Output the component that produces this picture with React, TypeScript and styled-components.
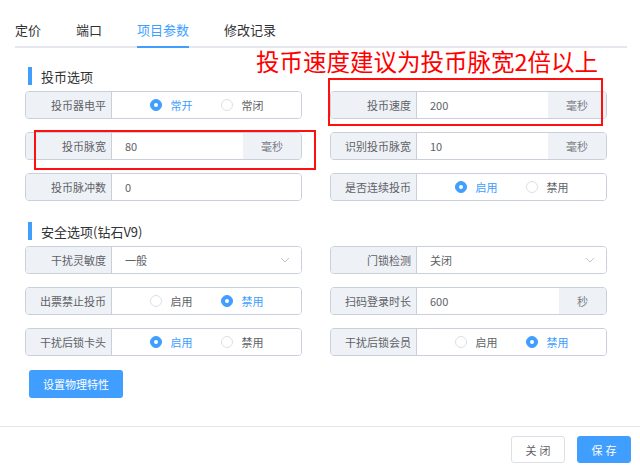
import React from "react";
import styled, { createGlobalStyle } from "styled-components";

const Global = createGlobalStyle`
  html, body { margin: 0; padding: 0; background: #fff; }
  body { font-family: "Noto Sans CJK SC", "Noto Sans", sans-serif; }
  * { box-sizing: border-box; }
`;

const Page = styled.div`
  position: relative;
  width: 640px;
  height: 470px;
  overflow: hidden;
  background: #fff;
`;

const TabBar = styled.div`
  display: flex;
  gap: 35px;
  margin: 14px 13px 0 15px;
  height: 34px;
  border-bottom: 2px solid #e4e7ed;
`;

const Tab = styled.div<{ $active?: boolean }>`
  font-size: 13px;
  line-height: 32px;
  height: 34px;
  color: ${(p) => (p.$active ? "#409eff" : "#303133")};
  border-bottom: 2px solid ${(p) => (p.$active ? "#409eff" : "transparent")};
  white-space: nowrap;
`;

const Body = styled.div`
  padding: 0 0 0 25px;
`;

const SectionTitle = styled.div<{ $top: number; $bottom: number }>`
  display: flex;
  align-items: center;
  height: 18px;
  margin: ${(p) => p.$top}px 0 ${(p) => p.$bottom}px 3px;
  font-size: 13px;
  color: #303133;
  &::before {
    content: "";
    width: 4px;
    height: 18px;
    background: #409eff;
    margin-right: 9px;
  }
`;

const Grid = styled.div`
  display: grid;
  grid-template-columns: 277px 277px;
  grid-auto-rows: 28px;
  column-gap: 28px;
  row-gap: 13px;
`;

const Field = styled.div`
  display: flex;
  height: 28px;
  border: 1px solid #c9d0db;
  border-radius: 4px;
  overflow: hidden;
  font-size: 11px;
  color: #606266;
`;

const Label = styled.div`
  flex: 0 0 86px;
  display: flex;
  align-items: center;
  justify-content: flex-end;
  padding-right: 5px;
  background: #eef1f6;
  border-right: 1px solid #c9d0db;
  white-space: nowrap;
`;

const Value = styled.div`
  flex: 1;
  display: flex;
  align-items: center;
  padding-left: 13px;
  background: #fff;
`;

const Append = styled.div`
  display: flex;
  align-items: center;
  padding: 0 18px;
  background: #eef1f6;
  color: #7a7e85;
`;

const SelectBox = styled(Value)`
  justify-content: space-between;
  padding-right: 11px;
`;

const RadioGroup = styled.div`
  flex: 1;
  display: flex;
  align-items: center;
  justify-content: center;
  gap: 28px;
  background: #fff;
`;

const RadioItem = styled.div<{ $checked?: boolean }>`
  display: flex;
  align-items: center;
  gap: 9px;
  color: ${(p) => (p.$checked ? "#409eff" : "#606266")};
`;

const RadioDot = styled.span<{ $checked?: boolean }>`
  width: 12px;
  height: 12px;
  border-radius: 50%;
  border: 1px solid ${(p) => (p.$checked ? "#409eff" : "#dcdfe6")};
  background: ${(p) => (p.$checked ? "#409eff" : "#fff")};
  display: flex;
  align-items: center;
  justify-content: center;
  &::after {
    content: "";
    width: 4px;
    height: 4px;
    border-radius: 50%;
    background: #fff;
    display: ${(p) => (p.$checked ? "block" : "none")};
  }
`;

const PrimaryButton = styled.button`
  margin-top: 14px;
  margin-left: 4px;
  height: 28px;
  width: 94px;
  border: none;
  border-radius: 3px;
  background: #409eff;
  color: #fff;
  font-family: inherit;
  font-size: 11px;
  padding: 0;
`;

const Footer = styled.div`
  margin-top: 28px;
  border-top: 1px solid #e4e7ed;
  display: flex;
  justify-content: flex-end;
  gap: 12px;
  padding: 9px 9px 0 0;
`;

const FooterButton = styled.button<{ $primary?: boolean }>`
  width: 54px;
  height: 27px;
  border-radius: 3px;
  font-family: inherit;
  font-size: 11px;
  letter-spacing: 3px;
  padding: 0 0 0 3px;
  border: 1px solid ${(p) => (p.$primary ? "#409eff" : "#dcdfe6")};
  background: ${(p) => (p.$primary ? "#409eff" : "#fff")};
  color: ${(p) => (p.$primary ? "#fff" : "#606266")};
`;

const Note = styled.div`
  position: absolute;
  left: 256px;
  top: 48px;
  font-size: 23.5px;
  line-height: 26px;
  color: #ff0000;
  white-space: nowrap;
`;

const RedBox = styled.div`
  position: absolute;
  border: 2px solid #ff1010;
`;

const Chevron = () => (
  <svg width="10" height="6" viewBox="0 0 10 6" fill="none">
    <path d="M1 1l4 4 4-4" stroke="#c0c4cc" strokeWidth="1" />
  </svg>
);

type RadioProps = { options: string[]; value: number };
const Radios = ({ options, value }: RadioProps) => (
  <RadioGroup>
    {options.map((o, i) => (
      <RadioItem key={o} $checked={i === value}>
        <RadioDot $checked={i === value} />
        {o}
      </RadioItem>
    ))}
  </RadioGroup>
);

export default function App() {
  return (
    <Page>
      <Global />
      <TabBar>
        <Tab>定价</Tab>
        <Tab>端口</Tab>
        <Tab $active>项目参数</Tab>
        <Tab>修改记录</Tab>
      </TabBar>
      <Body>
        <SectionTitle $top={19} $bottom={6}>投币选项</SectionTitle>
        <Grid>
          <Field>
            <Label>投币器电平</Label>
            <Radios options={["常开", "常闭"]} value={0} />
          </Field>
          <Field>
            <Label>投币速度</Label>
            <Value>200</Value>
            <Append>毫秒</Append>
          </Field>
          <Field>
            <Label>投币脉宽</Label>
            <Value>80</Value>
            <Append>毫秒</Append>
          </Field>
          <Field>
            <Label>识别投币脉宽</Label>
            <Value>10</Value>
            <Append>毫秒</Append>
          </Field>
          <Field>
            <Label>投币脉冲数</Label>
            <Value>0</Value>
          </Field>
          <Field>
            <Label>是否连续投币</Label>
            <Radios options={["启用", "禁用"]} value={0} />
          </Field>
        </Grid>
        <SectionTitle $top={21} $bottom={6}>安全选项(钻石V9)</SectionTitle>
        <Grid>
          <Field>
            <Label>干扰灵敏度</Label>
            <SelectBox>
              一般
              <Chevron />
            </SelectBox>
          </Field>
          <Field>
            <Label>门锁检测</Label>
            <SelectBox>
              关闭
              <Chevron />
            </SelectBox>
          </Field>
          <Field>
            <Label>出票禁止投币</Label>
            <Radios options={["启用", "禁用"]} value={1} />
          </Field>
          <Field>
            <Label>扫码登录时长</Label>
            <Value>600</Value>
            <Append>秒</Append>
          </Field>
          <Field>
            <Label>干扰后锁卡头</Label>
            <Radios options={["启用", "禁用"]} value={0} />
          </Field>
          <Field>
            <Label>干扰后锁会员</Label>
            <Radios options={["启用", "禁用"]} value={1} />
          </Field>
        </Grid>
        <PrimaryButton>设置物理特性</PrimaryButton>
      </Body>
      <Footer>
        <FooterButton>关闭</FooterButton>
        <FooterButton $primary>保存</FooterButton>
      </Footer>
      <Note>投币速度建议为投币脉宽2倍以上</Note>
      <RedBox style={{ left: 328, top: 78, width: 275, height: 48 }} />
      <RedBox style={{ left: 34, top: 130, width: 282, height: 40 }} />
    </Page>
  );
}
